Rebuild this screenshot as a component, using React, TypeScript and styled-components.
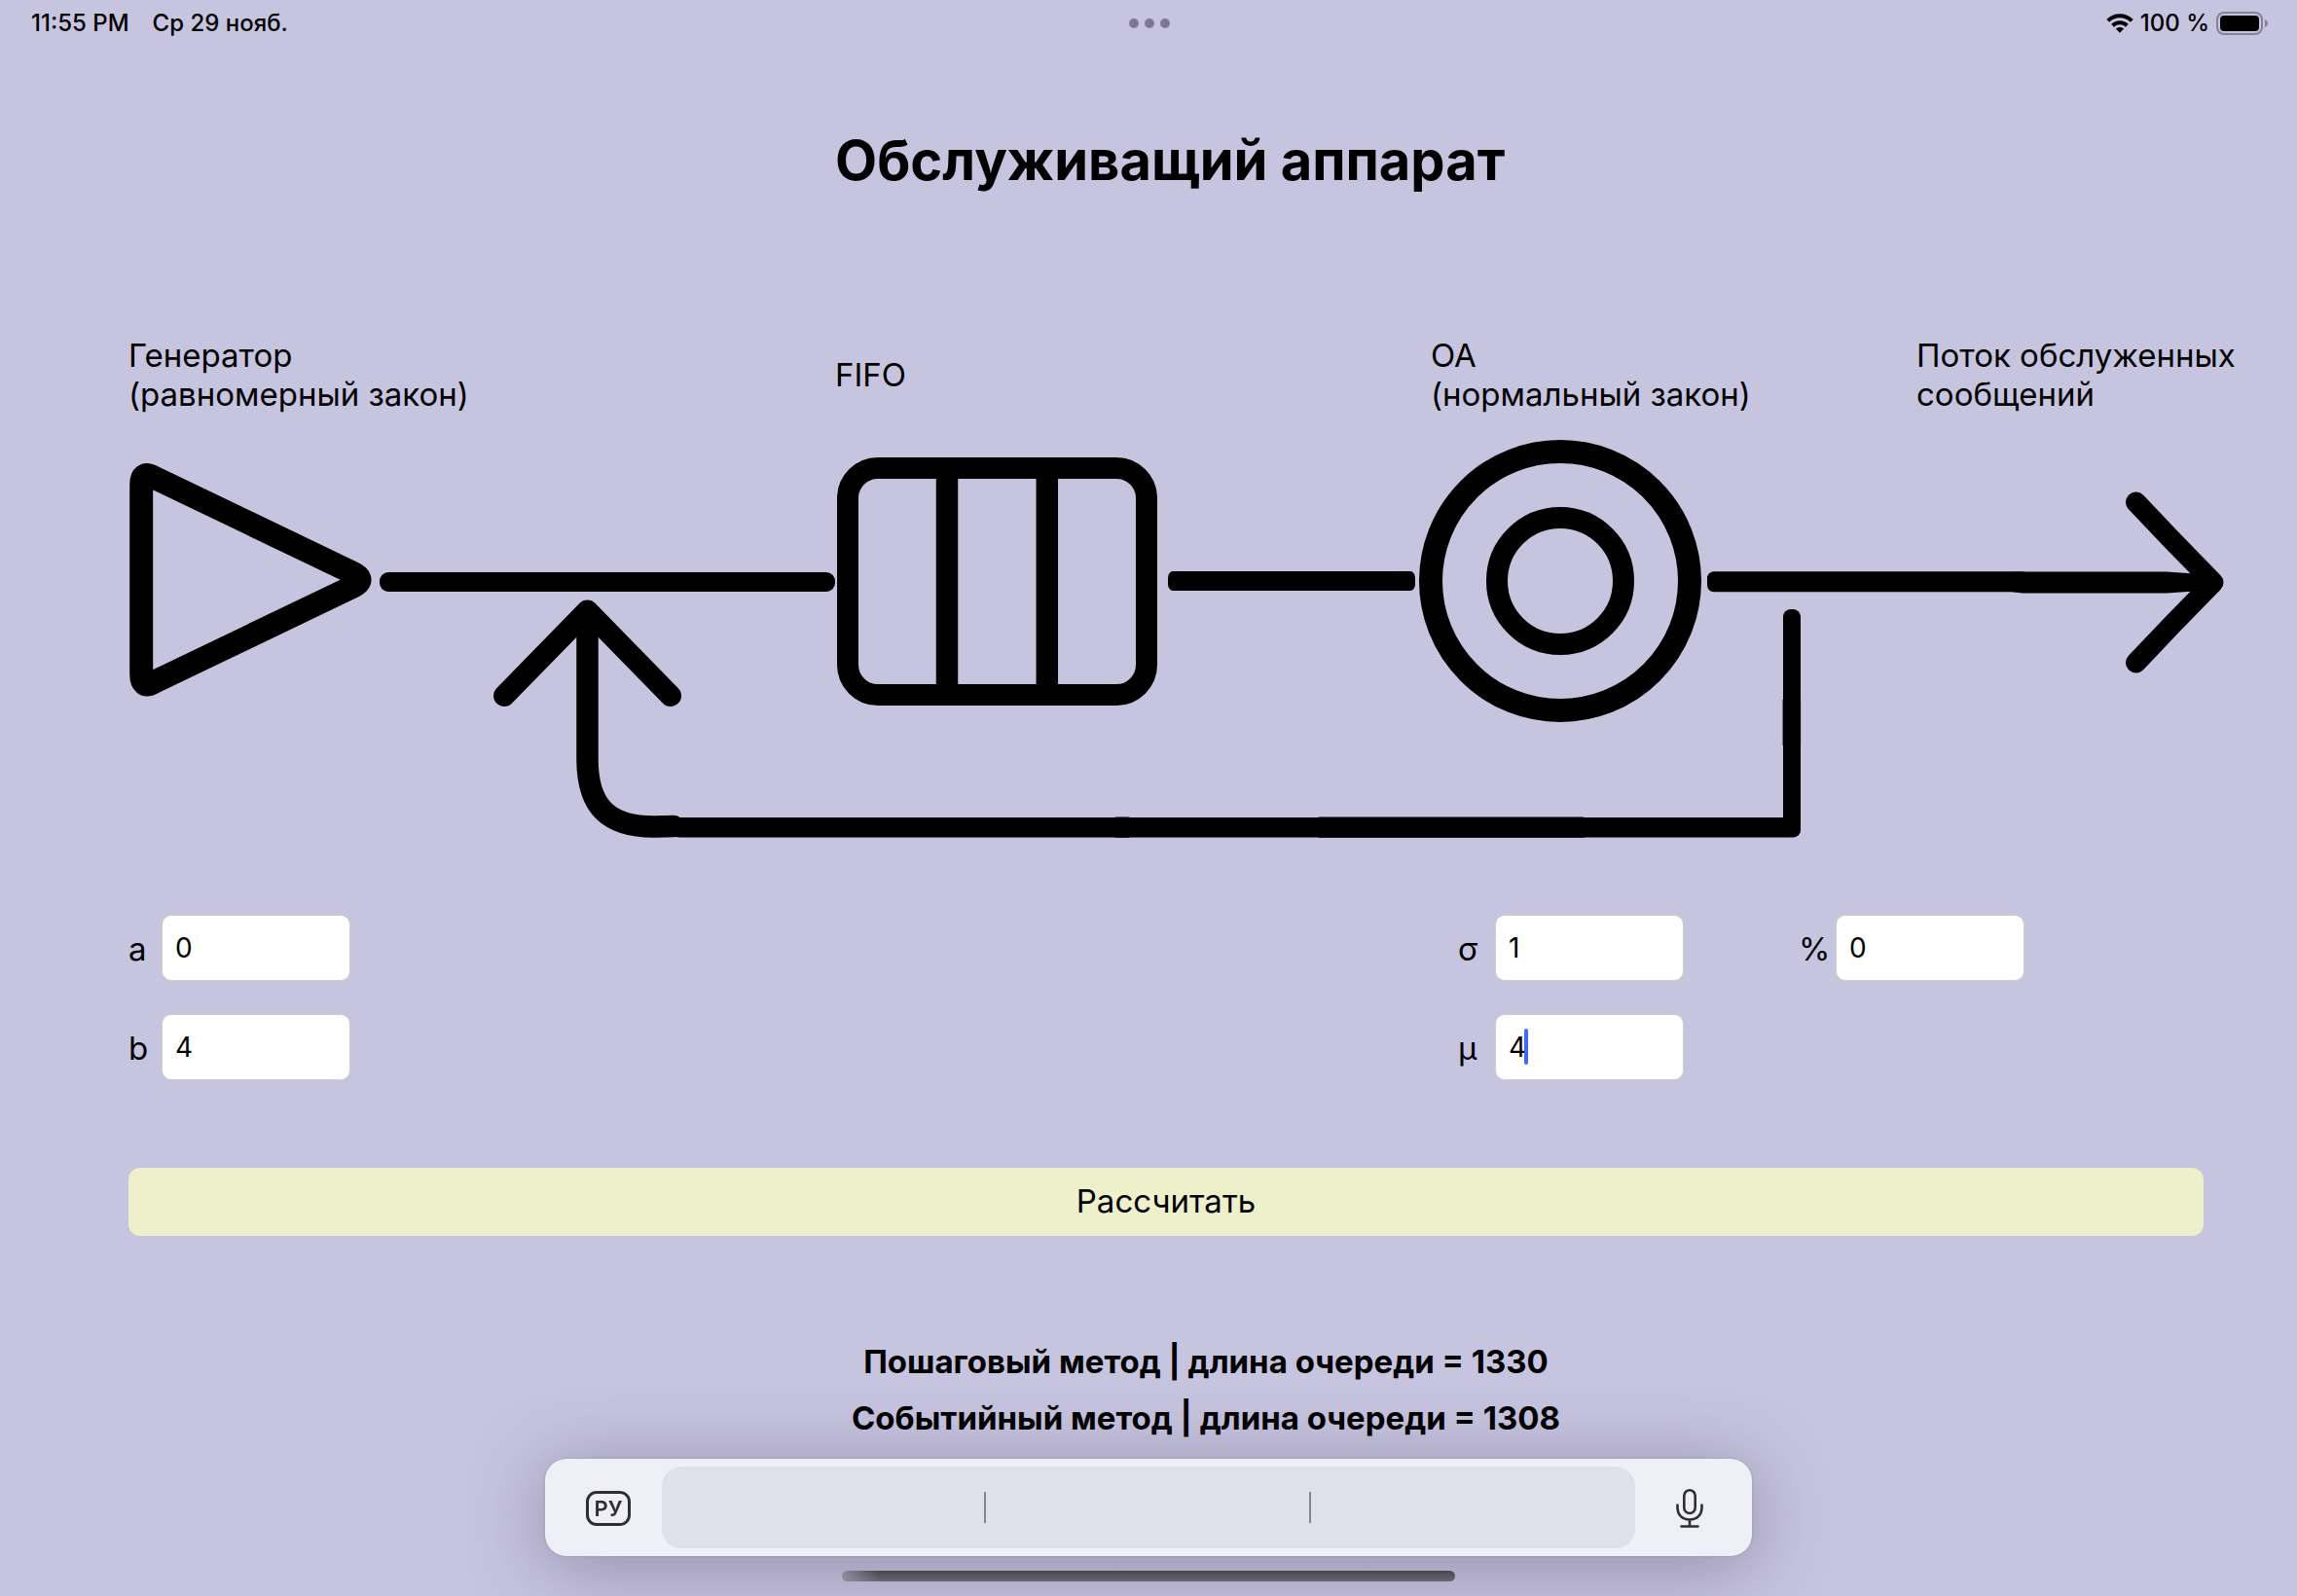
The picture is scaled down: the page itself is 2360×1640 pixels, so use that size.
import React, { useState } from "react";
import styled, { createGlobalStyle } from "styled-components";

const GlobalStyle = createGlobalStyle`
  * { box-sizing: border-box; }
  body {
    margin: 0;
    background: #c7c4e0;
    color: #000;
    font-family: Inter, "Liberation Sans", sans-serif;
  }
`;

const Page = styled.div`
  min-height: 100vh;
  background: #c7c4e0;
`;

const StatusBar = styled.header`
  display: grid;
  grid-template-columns: 1fr auto 1fr;
  align-items: center;
  height: 48px;
  padding: 0 30px 0 32px;
  font-size: 24px;
  line-height: 28px;
  font-weight: 500;
`;

const StatusLeft = styled.div`
  display: flex;
  gap: 24px;
`;

const StatusRight = styled.div`
  display: flex;
  align-items: center;
  justify-content: flex-end;
  gap: 7px;
`;

const Dots = styled.div`
  display: flex;
  gap: 6px;
`;

const Dot = styled.span`
  width: 10px;
  height: 10px;
  border-radius: 50%;
  background: #7d7995;
`;

const Main = styled.main`
  padding: 81px 70px 0 132px;
`;

const columns = "726fr 612fr 499fr 321fr";

const TitleRow = styled.div`
  display: grid;
  grid-template-columns: ${columns};
`;

const Title = styled.h1`
  grid-column: 2 / -1;
  margin: 0;
  font-size: 56px;
  line-height: 72px;
  font-weight: 700;
  white-space: nowrap;
`;

const Captions = styled.div`
  display: grid;
  grid-template-columns: ${columns};
  align-items: center;
  margin-top: 144px;
`;

const Caption = styled.p`
  margin: 0;
  min-width: 0;
  font-size: 33px;
  line-height: 40px;
  white-space: pre;
`;

const Diagram = styled.svg`
  display: block;
  width: 100%;
  margin-top: 15px;
`;

const Form = styled.form`
  margin: 70px 26px 0 0;
`;

const Groups = styled.div`
  display: grid;
  grid-template-columns: 1366fr 350fr 416fr;
  align-items: start;
`;

const Group = styled.div`
  display: grid;
  gap: 34px;
`;

const Field = styled.div<{ $label: number }>`
  display: grid;
  grid-template-columns: ${(p) => p.$label}px 194px;
  align-items: center;
`;

const FieldLabel = styled.label`
  padding-top: 2px;
  font-size: 33px;
  line-height: 40px;
`;

const InputWrap = styled.div`
  position: relative;
`;

const Input = styled.input`
  display: block;
  width: 100%;
  height: 68px;
  padding: 0 13px;
  border: 1px solid #cdcdd0;
  border-radius: 10px;
  background: #fff;
  color: #000;
  font: 400 28px/36px Inter, "Liberation Sans", sans-serif;
  outline: none;
`;

const Caret = styled.span`
  position: absolute;
  top: 15px;
  left: 30px;
  width: 4px;
  height: 37px;
  border-radius: 2px;
  background: #4269ef;
`;

const Submit = styled.button`
  display: block;
  width: 100%;
  height: 70px;
  margin-top: 90px;
  padding: 0 0 2px;
  border: 0;
  border-radius: 12px;
  background: #eef0cc;
  color: #000;
  font: 400 33px/40px Inter, "Liberation Sans", sans-serif;
`;

const Results = styled.div`
  margin-top: 100px;
  padding-left: 82px;
  text-align: center;
`;

const Result = styled.p`
  margin: 0;
  font-size: 33px;
  line-height: 58px;
  font-weight: 700;
`;

const Dock = styled.footer`
  position: fixed;
  right: 0;
  bottom: 15px;
  left: 0;
  display: flex;
  flex-direction: column;
  align-items: center;
  gap: 15px;
`;

const KeyBar = styled.div`
  display: grid;
  grid-template-columns: 120px 1fr 120px;
  align-items: center;
  width: 1240px;
  max-width: 100%;
  height: 100px;
  padding: 8px 0;
  border-radius: 22px;
  background: #efeff8;
  box-shadow: 0 0 2px rgba(60, 55, 90, 0.3), 0 10px 80px rgba(60, 55, 80, 0.4);
`;

const KeyButton = styled.button`
  display: flex;
  align-items: center;
  height: 84px;
  padding: 2px 42px 0;
  border: 0;
  background: none;
  color: #2f2f31;
`;

const Language = styled.span`
  display: flex;
  flex: none;
  align-items: center;
  justify-content: center;
  width: 46px;
  height: 36px;
  border: 3px solid #2f2f31;
  border-radius: 11px;
  font: 600 22px/28px Inter, "Liberation Sans", sans-serif;
`;

const Suggestions = styled.div`
  display: grid;
  grid-template-columns: repeat(3, 1fr);
  align-items: center;
  height: 84px;
  border-radius: 20px;
  background: #e0e0ea;
`;

const Slot = styled.span`
  height: 32px;

  &:not(:last-child) {
    border-right: 2px solid #85858f;
  }
`;

const HomeIndicator = styled.div`
  width: 630px;
  max-width: 60%;
  height: 11px;
  border-radius: 6px;
  background: linear-gradient(90deg, rgba(150, 146, 166, 0.9), rgba(150, 146, 166, 0) 6%),
    linear-gradient(#47454c, #6a6774);
`;

type FieldSpec = { id: string; label: string; value: string; active?: boolean };

const groups: { width: number; fields: FieldSpec[] }[] = [
  {
    width: 34,
    fields: [
      { id: "a", label: "a", value: "0" },
      { id: "b", label: "b", value: "4" },
    ],
  },
  {
    width: 38,
    fields: [
      { id: "sigma", label: "σ", value: "1" },
      { id: "mu", label: "μ", value: "4", active: true },
    ],
  },
  { width: 38, fields: [{ id: "percent", label: "%", value: "0" }] },
];

function NumberField({ spec, width }: { spec: FieldSpec; width: number }) {
  const [value, setValue] = useState(spec.value);
  return (
    <Field $label={width}>
      <FieldLabel htmlFor={spec.id}>{spec.label}</FieldLabel>
      <InputWrap>
        <Input
          id={spec.id}
          type="text"
          inputMode="numeric"
          value={value}
          onChange={(e) => setValue(e.target.value)}
        />
        {spec.active && <Caret />}
      </InputWrap>
    </Field>
  );
}

function QueueDiagram() {
  return (
    <Diagram viewBox="132 440 2158 430" fill="none" stroke="#000" aria-hidden="true">
      {/* generator */}
      <path
        d="M145.200 693V498C145.200 489 149 485.500 157 490L360 587.500Q379 595.700 360 604L157 701.500C149 706 145.200 702 145.200 693Z"
        strokeWidth="24"
        strokeLinejoin="round"
      />
      <rect x="390" y="588" width="468" height="20" rx="9" fill="#000" stroke="none" />

      {/* queue */}
      <rect x="871" y="481" width="307" height="233" rx="31" strokeWidth="22" />
      <path d="M973 482V713M1075.800 482V713" strokeWidth="22.500" />
      <rect x="1200" y="587" width="254" height="20" rx="5" ry="7" fill="#000" stroke="none" />

      {/* server */}
      <circle cx="1603" cy="597" r="133" strokeWidth="24" />
      <circle cx="1603" cy="597" r="65" strokeWidth="22" />

      {/* output flow */}
      <rect x="1754" y="587.200" width="330" height="21" rx="7" fill="#000" stroke="none" />
      <path d="M2066 588L2078 587.500H2226L2262 590V607L2226 609.500H2078L2066 608Z" fill="#000" stroke="none" />
      <path
        d="M2194.500 516L2233 556.500L2274 598.500L2233 640.500L2194.500 681"
        strokeWidth="21"
        strokeLinecap="round"
        strokeLinejoin="round"
      />

      {/* feedback loop */}
      <path
        d="M518 715L603.500 627.500L689 715"
        strokeWidth="22"
        strokeLinecap="round"
        strokeLinejoin="round"
      />
      <path
        d="M603.500 630L603.500 780C603.500 831 627 849.500 672 849.500L692 849"
        strokeWidth="22.500"
        strokeLinecap="round"
      />
      <rect x="690" y="840" width="1160" height="20.500" rx="8" fill="#000" stroke="none" />
      <rect x="1141" y="839.600" width="24" height="21.200" rx="6" fill="#000" stroke="none" />
      <rect x="1350" y="839.600" width="282" height="21.200" rx="6" fill="#000" stroke="none" />
      <rect x="1832" y="626" width="18" height="234" rx="8" fill="#000" stroke="none" />
      <rect x="1831.600" y="719" width="18.500" height="47" fill="#000" stroke="none" />
    </Diagram>
  );
}

function WifiIcon() {
  return (
    <svg width="28" height="20" viewBox="0 0 28 20" fill="none" stroke="#000" strokeWidth="4" aria-hidden="true">
      <path d="M1.700 7.300C8.500 .400 19.500 .400 26.300 7.300" />
      <path d="M6.600 12.200C10.700 8.200 17.300 8.200 21.400 12.200" />
      <path d="M14 19.800L9.800 15.600C12.200 13.500 15.800 13.500 18.200 15.600Z" fill="#000" stroke="none" />
    </svg>
  );
}

function BatteryIcon() {
  return (
    <svg width="53" height="24" viewBox="0 0 53 24" aria-hidden="true">
      <rect x="1" y="1" width="46" height="22" rx="7" fill="none" stroke="#85819b" strokeWidth="2" />
      <rect x="4" y="4" width="40" height="16" rx="4" fill="#000" />
      <path d="M50 8C54 9.500 54 14.500 50 16Z" fill="#85819b" />
    </svg>
  );
}

function MicIcon() {
  return (
    <svg
      width="28"
      height="40"
      viewBox="0 0 28 40"
      fill="none"
      stroke="currentColor"
      strokeWidth="2.600"
      strokeLinecap="round"
      aria-hidden="true"
    >
      <rect x="8.300" y="1.300" width="11.400" height="23.700" rx="5.700" />
      <path d="M1.500 16.500V19C1.500 26.500 6.500 31.500 14 31.500S26.500 26.500 26.500 19V16.500M14 31.500V38.500M5.500 38.500H22.500" />
    </svg>
  );
}

export default function App() {
  return (
    <Page>
      <GlobalStyle />
      <StatusBar>
        <StatusLeft>
          <span>11:55 PM</span>
          <span>Ср 29 нояб.</span>
        </StatusLeft>
        <Dots>
          <Dot />
          <Dot />
          <Dot />
        </Dots>
        <StatusRight>
          <WifiIcon />
          <span>100 %</span>
          <BatteryIcon />
        </StatusRight>
      </StatusBar>

      <Main>
        <TitleRow>
          <Title>Обслуживащий аппарат</Title>
        </TitleRow>
        <Captions>
          <Caption>{"Генератор\n(равномерный закон)"}</Caption>
          <Caption>FIFO</Caption>
          <Caption>{"ОА\n(нормальный закон)"}</Caption>
          <Caption>{"Поток обслуженных\nсообщений"}</Caption>
        </Captions>
        <QueueDiagram />

        <Form onSubmit={(e) => e.preventDefault()}>
          <Groups>
            {groups.map((group) => (
              <Group key={group.fields[0].id}>
                {group.fields.map((spec) => (
                  <NumberField key={spec.id} spec={spec} width={group.width} />
                ))}
              </Group>
            ))}
          </Groups>
          <Submit type="submit">Рассчитать</Submit>
          <Results>
            <Result>Пошаговый метод | длина очереди = 1330</Result>
            <Result>Событийный метод | длина очереди = 1308</Result>
          </Results>
        </Form>
      </Main>

      <Dock>
        <KeyBar>
          <KeyButton type="button" aria-label="Язык">
            <Language>РУ</Language>
          </KeyButton>
          <Suggestions>
            <Slot />
            <Slot />
            <Slot />
          </Suggestions>
          <KeyButton type="button" aria-label="Диктовка">
            <MicIcon />
          </KeyButton>
        </KeyBar>
        <HomeIndicator />
      </Dock>
    </Page>
  );
}
